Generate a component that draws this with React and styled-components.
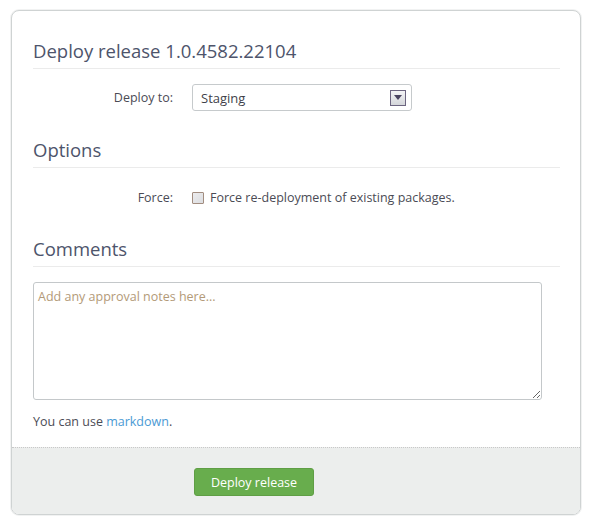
import React from "react";
import styled, { createGlobalStyle } from "styled-components";

const GlobalStyle = createGlobalStyle`
    html, body { margin: 0; padding: 0; background: #ffffff; }
    body { font-family: "Open Sans", "Noto Sans", sans-serif; color: #4b4b55; }
`;

const Page = styled.div`
    padding: 10px 11px 17px 11px;
    box-sizing: border-box; width: 592px;
`;

const Card = styled.div`
    border: 1px solid #cfd3d3; border-radius: 8px; overflow: hidden; background: #fff;
    box-shadow: 0 0 0 1px #f1f2f2;
`;

const Body = styled.div`
    padding: 25px 20px 17px 21px;
`;

const SectionTitle = styled.h2`
    margin: 0;
    font-weight: 400; font-size: 18.5px; line-height: 30px; color: #4d546b;
    border-bottom: 1px solid #ebebeb; padding-bottom: 2px;
`;

const Row = styled.div`
    display: flex; align-items: center; margin: ${p => p.mt}px 0 ${p => p.mb}px 0;
`;

const Label = styled.label`
    width: 140px; text-align: right; padding-right: 19px; font-size: 12.5px; color: #4b4b55;
`;

const Select = styled.div`
    width: 220px; height: 27px; box-sizing: border-box; border: 1px solid #c6cacc; border-radius: 3px;
    display: flex; align-items: center; justify-content: space-between; padding: 0 5px 0 8px;
    font-size: 13px; color: #3f3f4a; background: #fff;
`;

const ArrowBox = styled.span`
    width: 16px; height: 16px; box-sizing: border-box; border: 1px solid #6c6580;
    background: linear-gradient(#f4f4f6, #d4d6da); display: flex; align-items: center; justify-content: center;
`;

const Check = styled.span`
    width: 12px; height: 12px; box-sizing: border-box; border: 1px solid #a28d80; border-radius: 1px;
    background: linear-gradient(135deg, #ececee, #dcdde0); margin-right: 6px;
`;

const CheckText = styled.span`
    font-size: 12.5px; color: #4b4b55;
`;

const TextArea = styled.textarea`
    display: block; width: 509px; height: 118px; box-sizing: border-box; margin-top: 15px;
    border: 1px solid #c4c8ca; border-radius: 3px; padding: 5px 4px; resize: vertical;
    font-family: "Open Sans", "Noto Sans", sans-serif; font-size: 12.5px; color: #444;
    &::placeholder { color: #b39a78; }
`;

const Hint = styled.p`
    margin: 13px 0 0 0; font-size: 12.5px; color: #4b4b55;
    a { color: #4a9ad4; text-decoration: none; }
`;

const Footer = styled.div`
    background: #eceeed; border-top: 1px dotted #c8c8c8; height: 66px;
    display: flex; align-items: center; padding-left: 182px;
`;

const Button = styled.button`
    background: #68ad4d; color: #fff; border: 1px solid #5f9e45; border-radius: 3px;
    width: 120px; height: 28px; font-family: "Open Sans", "Noto Sans", sans-serif; font-size: 12.5px;
    margin-top: 2px;
`;

export default function App() {
    return (
        <>
            <GlobalStyle />
            <Page>
                <Card>
                    <Body>
                        <SectionTitle>Deploy release 1.0.4582.22104</SectionTitle>
                        <Row mt={15} mb={24}>
                            <Label>Deploy to:</Label>
                            <Select>
                                <span>Staging</span>
                                <ArrowBox>
                                    <svg width="8" height="5" viewBox="0 0 8 5"><path d="M0 0h8L4 5z" fill="#4a4460"/></svg>
                                </ArrowBox>
                            </Select>
                        </Row>
                        <SectionTitle>Options</SectionTitle>
                        <Row mt={21} mb={28}>
                            <Label>Force:</Label>
                            <Check />
                            <CheckText>Force re-deployment of existing packages.</CheckText>
                        </Row>
                        <SectionTitle>Comments</SectionTitle>
                        <TextArea placeholder="Add any approval notes here..." />
                        <Hint>You can use <a href="#">markdown</a>.</Hint>
                    </Body>
                    <Footer>
                        <Button>Deploy release</Button>
                    </Footer>
                </Card>
            </Page>
        </>
    );
}
